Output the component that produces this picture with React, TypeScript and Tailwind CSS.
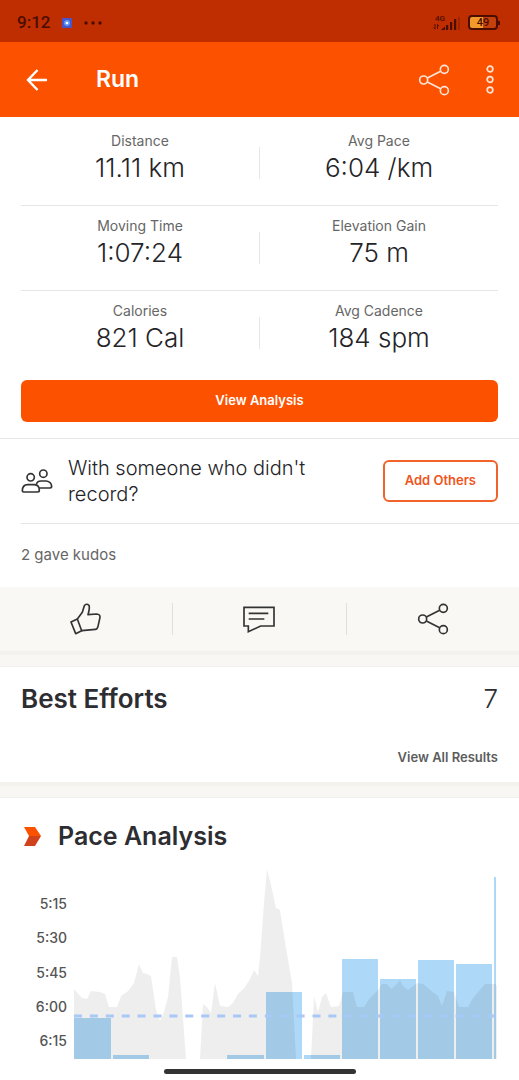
import React from 'react';

interface Stat {
  label: string;
  value: string;
}

interface Bar {
  x: number;
  top: number;
  width: number;
}

const STAT_ROWS: Stat[][] = [
  [
    { label: 'Distance', value: '11.11 km' },
    { label: 'Avg Pace', value: '6:04 /km' },
  ],
  [
    { label: 'Moving Time', value: '1:07:24' },
    { label: 'Elevation Gain', value: '75 m' },
  ],
  [
    { label: 'Calories', value: '821 Cal' },
    { label: 'Avg Cadence', value: '184 spm' },
  ],
];

const PACE_LABELS = ['5:15', '5:30', '5:45', '6:00', '6:15'];

const CHART_WIDTH = 424;
const CHART_HEIGHT = 191;

const BARS: Bar[] = [
  { x: 0, top: 150, width: 37 },
  { x: 39, top: 187, width: 36 },
  { x: 153, top: 187, width: 37 },
  { x: 192, top: 124, width: 36 },
  { x: 230, top: 187, width: 36 },
  { x: 268, top: 91, width: 36 },
  { x: 306, top: 111, width: 36 },
  { x: 344, top: 92, width: 36 },
  { x: 382, top: 96, width: 36 },
  { x: 420, top: 9, width: 2 },
];

// Elevation profile drawn over the splits
const ELEVATION =
  '0,191 0,121 8,130 13,131 17,123 26,124 31,126 35,139 43,139 47,128 54,123 60,115 65,96 69,105 73,106 77,108 82,142 86,153 90,144 94,129 98,89 103,89 106,109 112,191 ' +
  '126,191 129,136 133,139 137,145 141,115 146,138 154,139 158,136 164,126 171,119 176,111 180,102 184,108 186,89 190,35 193,1 197,17 202,40 206,42 211,74 218,115 222,191 ' +
  '237,191 240,128 244,144 248,129 252,125 257,139 265,138 269,124 279,124 283,139 290,139 296,130 304,122 308,116 313,116 317,121 322,117 326,112 329,118 334,122 343,115 349,116 355,121 364,128 368,138 373,123 380,124 385,139 394,139 399,130 411,116 421,116 423,118 423,191';

function ShareIcon() {
  return (
    <svg className="w-8 h-8" fill="none" stroke="currentColor" strokeWidth={5} viewBox="0 0 96 96">
      <circle cx="17" cy="48" r="12" />
      <circle cx="79" cy="16" r="12" />
      <circle cx="79" cy="80" r="12" />
      <path d="M28 42L68 22M28 54L68 74" />
    </svg>
  );
}

function StatusBar() {
  return (
    <div className="h-[42px] pl-[17px] pr-[19px] pt-[3px] flex items-center justify-between bg-[#bf2e00] text-[#4a0d00]">
      <div className="flex items-center gap-3">
        <span className="font-[Roboto] text-[17px] font-medium">9:12</span>
        <svg className="w-[10px] h-[10px]" viewBox="0 0 10 10">
          <rect width="10" height="10" rx="1" fill="#4a56c8" />
          <circle cx="5" cy="5" r="3" fill="#5f9cf5" />
          <circle cx="5" cy="5" r="1.3" fill="#ffffff" />
        </svg>
        <svg className="w-[18px] h-1" viewBox="0 0 18 4" fill="currentColor">
          <circle cx="2" cy="2" r="1.7" />
          <circle cx="9" cy="2" r="1.7" />
          <circle cx="16" cy="2" r="1.7" />
        </svg>
      </div>
      <div className="flex items-center gap-2">
        <div className="flex flex-col">
          <span className="font-[Roboto] text-[8px] leading-[8px] font-medium pl-[2px]">4G</span>
          <svg className="w-[27px] h-[7px] overflow-visible" viewBox="0 0 27 7" fill="currentColor">
            <path d="M2 1V6M0.500 4.500L2 6M4.500 6V1.500L6 3" stroke="currentColor" fill="none" strokeWidth="0.9" />
            <path d="M8 7L12 3.500V7Z" />
            <rect x="13" y="2" width="2.200" height="5" />
            <rect x="17" y="-1" width="2.200" height="8" />
            <rect x="21" y="-4" width="2.200" height="11" />
            <rect x="25" y="-6" width="1.800" height="13" opacity="0.3" />
          </svg>
        </div>
        <div className="flex items-center">
          <div className="w-[30px] h-[15px] border-2 border-current rounded bg-linear-to-r from-[#f09a2c] from-50% to-[#c4400c] to-50% flex items-center justify-center font-[Roboto] text-[11px] leading-none font-medium">
            49
          </div>
          <div className="w-[2px] h-1 bg-current" />
        </div>
      </div>
    </div>
  );
}

function Header() {
  return (
    <header className="h-[75px] pl-[26px] pr-[19px] flex items-center bg-[#fc5200] text-white">
      <button aria-label="Back">
        <svg className="w-[22px] h-[22px]" fill="none" stroke="currentColor" strokeWidth={2.4} viewBox="0 0 22 22">
          <path d="M21 11H2M11.500 1L2 11L11.500 21" />
        </svg>
      </button>
      <h1 className="ml-12 flex-1 text-[23px] font-semibold">Run</h1>
      <button aria-label="Share" className="text-[#ffe3d5]">
        <ShareIcon />
      </button>
      <button aria-label="More options" className="ml-[30px] text-[#ffe3d5]">
        <svg className="w-5 h-8" fill="none" stroke="currentColor" strokeWidth={1.7} viewBox="0 0 20 32">
          <circle cx="10" cy="5" r="2.800" />
          <circle cx="10" cy="15.500" r="2.800" />
          <circle cx="10" cy="26" r="2.800" />
        </svg>
      </button>
    </header>
  );
}

function StatCell({ label, value }: Stat) {
  return (
    <div className="flex-1 flex flex-col items-center">
      <dt className="text-sm leading-5 text-[#666666]">{label}</dt>
      <dd className="mt-px text-[26px] leading-8 font-light text-[#242428]">{value}</dd>
    </div>
  );
}

function Stats() {
  return (
    <div className="px-[21px] pt-1">
      {STAT_ROWS.map(([left, right], i) => (
        <dl
          key={left.label}
          className={`h-[85px] pt-[10px] flex items-start ${
            i < STAT_ROWS.length - 1 ? 'border-b border-[#e6e6e6]' : ''
          }`}
        >
          <StatCell {...left} />
          <div className="mt-4 h-8 w-px bg-[#e6e6e6]" />
          <StatCell {...right} />
        </dl>
      ))}
    </div>
  );
}

function AddOthers() {
  return (
    <div className="border-t border-[#e6e6e6] pl-[21px]">
      <div className="h-[85px] flex items-center border-b border-[#e6e6e6]">
        <svg className="w-8 h-8 shrink-0 text-[#333333]" fill="none" stroke="currentColor" strokeWidth={5} viewBox="0 0 96 96">
          <circle cx="29" cy="37" r="11" />
          <circle cx="67" cy="26" r="11" />
          <path d="M4 78Q4 59 20 59H40Q55 60 55 76Q55 81 50 81H8Q4 81 4 78Z" />
          <path d="M46 59Q48 48 60 48H76Q91 50 92 64Q92 69 87 69H55" />
        </svg>
        <p className="ml-[15px] flex-1 text-xl leading-[26px] font-light text-[#242428]">
          With someone who didn't record?
        </p>
        <button className="h-[42px] px-5 ml-4 mr-[21px] border-2 border-[#f0642c] rounded-md text-[13px] font-semibold text-[#f0541c]">
          Add Others
        </button>
      </div>
    </div>
  );
}

function Actions() {
  return (
    <div className="h-16 pb-px flex items-center bg-[#f9f8f4] text-[#333333]">
      <button aria-label="Give kudos" className="flex-1 flex justify-center">
        <svg className="w-8 h-8" fill="none" stroke="currentColor" strokeWidth={5} strokeLinejoin="round" viewBox="0 0 96 96">
          <path d="M3 57L22 48L35 83L17 92Z" />
          <path d="M22 48L37 28L43 8Q49 0 57 7Q60 14 54 35L80 33Q91 34 90 43L84 70Q82 79 76 79L35 83" />
        </svg>
      </button>
      <div className="w-px h-8 bg-[#e0dfdb]" />
      <button aria-label="Comment" className="flex-1 flex justify-center">
        <svg className="w-8 h-8" fill="none" stroke="currentColor" strokeWidth={5} viewBox="0 0 96 96">
          <path d="M3 13H93V69H53L16 86V69H3Z" />
          <path d="M17 31H76M17 48H64" />
        </svg>
      </button>
      <div className="w-px h-8 bg-[#e0dfdb]" />
      <button aria-label="Share activity" className="flex-1 flex justify-center">
        <ShareIcon />
      </button>
    </div>
  );
}

function SectionGap() {
  return <div className="h-4 border-t-4 border-b border-t-[#f3f2ed] border-b-[#f2f1ed] bg-[#f8f7f3]" />;
}

function PaceChart() {
  return (
    <div className="flex pr-[21px]">
      <div className="w-[74px] pr-[7px] pt-[26px] pb-2 flex flex-col justify-between text-right text-sm leading-5 font-medium text-[#555555]">
        {PACE_LABELS.map((label) => (
          <span key={label}>{label}</span>
        ))}
      </div>
      <svg
        className="flex-1 min-w-0 h-[191px]"
        viewBox={`0 0 ${CHART_WIDTH} ${CHART_HEIGHT}`}
        preserveAspectRatio="none"
      >
        {BARS.map((bar) => (
          <rect
            key={bar.x}
            x={bar.x}
            y={bar.top}
            width={bar.width}
            height={CHART_HEIGHT - bar.top}
            fill="#aed8f7"
          />
        ))}
        <polygon points={ELEVATION} fill="#000000" fillOpacity={0.065} />
        <line
          x1="0"
          y1="148"
          x2="422"
          y2="148"
          stroke="#a8c8f5"
          strokeWidth={3}
          strokeDasharray="8 7.9"
        />
      </svg>
    </div>
  );
}

export default function App() {
  return (
    <div className="min-h-screen flex flex-col bg-white font-[Inter,sans-serif] text-[#2d2d32]">
      <StatusBar />
      <Header />
      <main>
        <Stats />
        <div className="px-[21px] pt-1 pb-4">
          <button className="w-full h-[42px] rounded-md bg-[#fc5200] text-[13px] font-semibold text-white">
            View Analysis
          </button>
        </div>
        <AddOthers />
        <p className="px-[21px] h-[63px] flex items-center text-[15px] text-[#666666]">2 gave kudos</p>
        <Actions />
        <SectionGap />

        <section className="h-[115px] px-[21px] pt-4 flex flex-col">
          <div className="flex items-center justify-between leading-8">
            <h2 className="text-[26px] font-semibold">Best Efforts</h2>
            <span className="text-[26px] font-light">7</span>
          </div>
          <a href="#results" className="mt-8 self-end text-[13px] leading-5 font-semibold text-[#5c5c5c]">
            View All Results
          </a>
        </section>
        <SectionGap />

        <section>
          <div className="h-[70px] pl-6 pt-[22px] flex items-start gap-4">
            <svg className="w-[18px] h-8" viewBox="0 0 18 32">
              <path d="M0 7H11L17 16H5Z" fill="#fc5200" />
              <path d="M5 16H17L11 26H0Z" fill="#d0421b" />
            </svg>
            <h2 className="text-[25px] leading-8 font-semibold">Pace Analysis</h2>
          </div>
          <PaceChart />
        </section>
      </main>
      <div className="mt-[10px] mx-auto w-48 h-[5px] rounded-full bg-[#333333]" />
    </div>
  );
}
